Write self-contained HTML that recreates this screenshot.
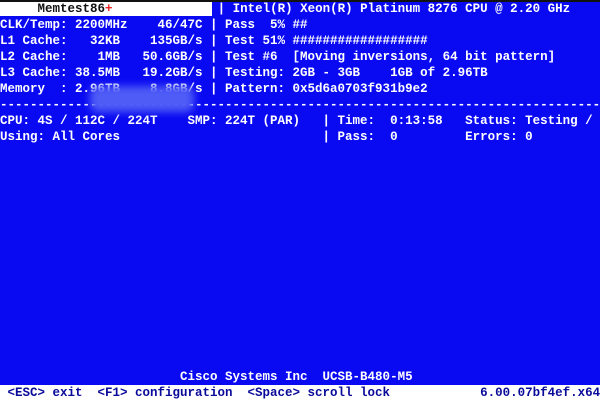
<!DOCTYPE html>
<html><head><meta charset="utf-8"><style>
html,body{margin:0;padding:0;}
body{width:600px;height:401px;background:#0a0af2;overflow:hidden;position:relative;}
pre{margin:0;position:absolute;left:0;top:1px;font-family:"Liberation Mono",monospace;font-weight:bold;font-size:12.5px;line-height:16px;color:#fff;white-space:pre;}
.title{position:absolute;left:0;top:2px;width:212px;height:14px;background:#fff;}
.topline{position:absolute;left:0;top:0;width:600px;height:2px;background:#111;}
.blur{position:absolute;left:90px;top:86px;width:104px;height:26px;background:#4f5cf6;filter:blur(4px);border-radius:8px;}
.foot{position:absolute;left:0;top:385px;width:600px;height:16px;background:#fff;}
</style></head><body>
<div class="title"></div><div class="topline"></div>
<div class="foot"></div>
<pre><span style="color:#111">     Memtest86</span><span style="color:#e22">+</span>              | Intel(R) Xeon(R) Platinum 8276 CPU @ 2.20 GHz
CLK/Temp: 2200MHz    46/47C | Pass  5% ##
L1 Cache:   32KB    135GB/s | Test 51% ##################
L2 Cache:    1MB   50.6GB/s | Test #6  [Moving inversions, 64 bit pattern]
L3 Cache: 38.5MB   19.2GB/s | Testing: 2GB - 3GB    1GB of 2.96TB
Memory  : 2.96TB    8.8GB/s | Pattern: 0x5d6a0703f931b9e2
--------------------------------------------------------------------------------
CPU: 4S / 112C / 224T    SMP: 224T (PAR)   | Time:  0:13:58   Status: Testing /
Using: All Cores                           | Pass:  0         Errors: 0














                        Cisco Systems Inc  UCSB-B480-M5
<span style="color:#0a0a9a"> &lt;ESC&gt; exit  &lt;F1&gt; configuration  &lt;Space&gt; scroll lock            6.00.07bf4ef.x64</span></pre>
<div class="blur"></div>
</body></html>
